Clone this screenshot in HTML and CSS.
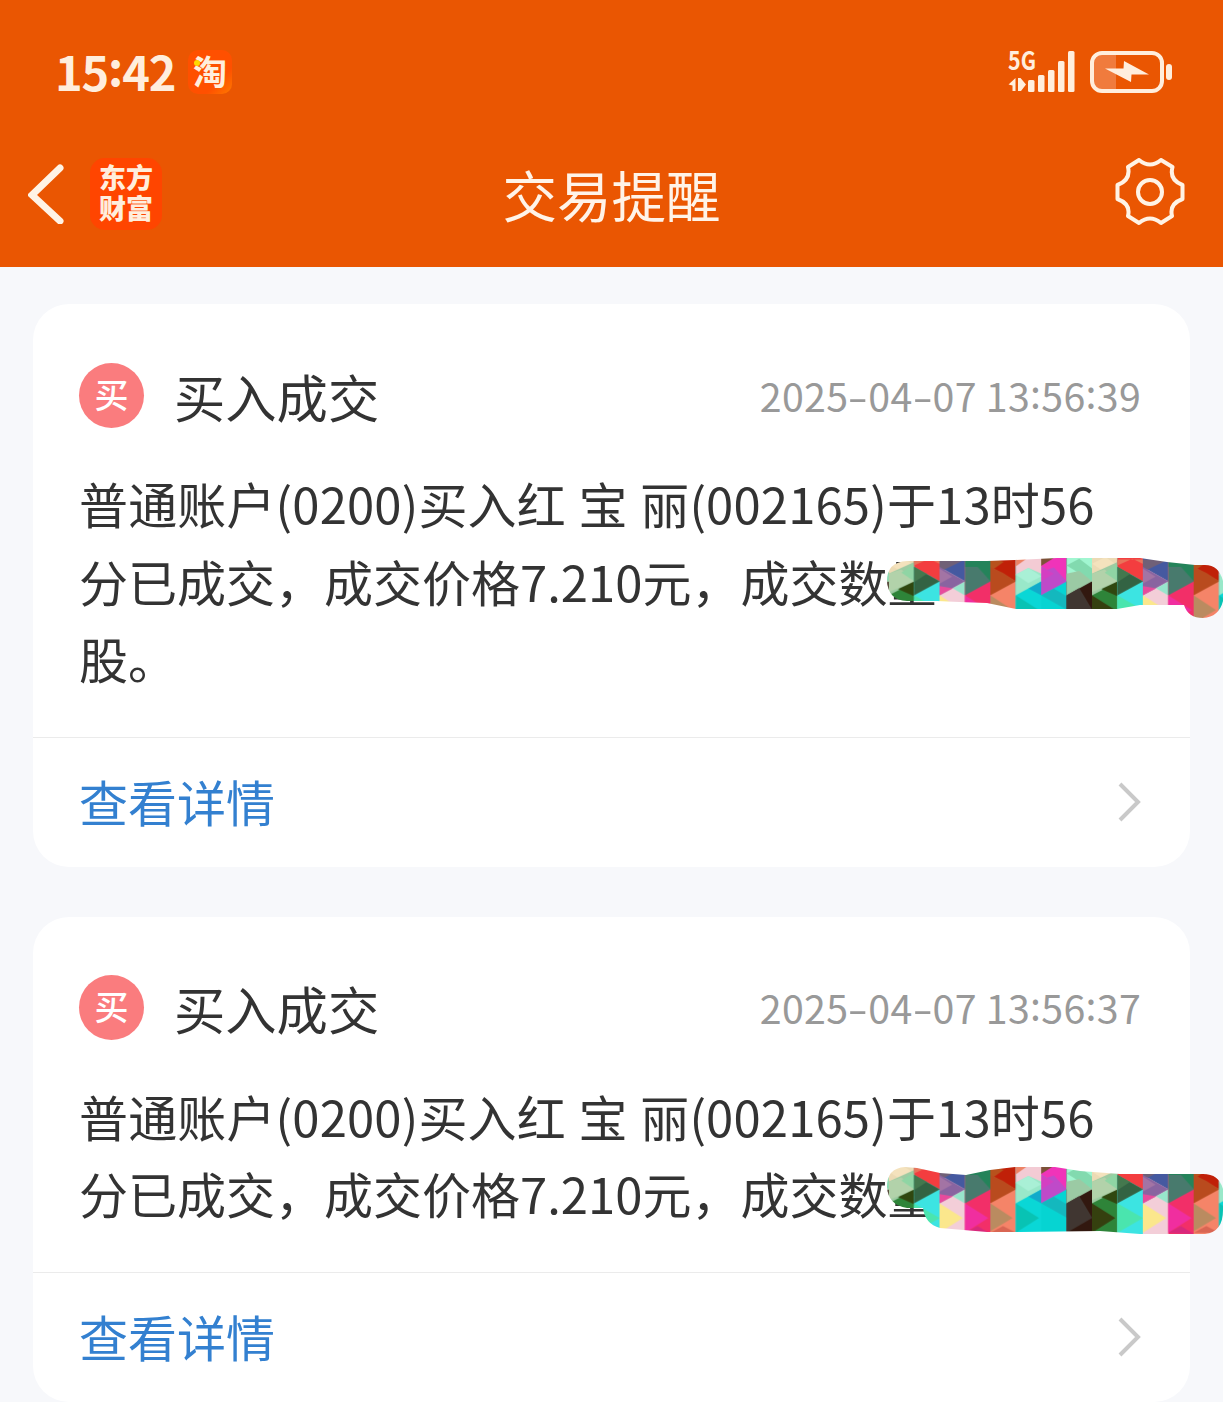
FILE: index.html
```html
<!DOCTYPE html>
<html lang="zh-CN">
<head>
    <meta charset="UTF-8">
    <meta name="viewport" content="width=device-width, initial-scale=1">
    <title>交易提醒</title>
    <link rel="stylesheet" href="styles.css">
</head>
<body>
    <header class="header">
        <div class="status">
            <span class="time">15<b>:</b>42</span>
            <span class="taobao">淘</span>
            <svg class="signal" width="68" height="44" viewBox="0 0 68 44">
                <text x="0" y="20" class="net" textLength="28" lengthAdjust="spacingAndGlyphs">5G</text>
                <path d="M0.500 34.500L7.500 28v13H4.500V35.500zM10 28h2.500l5.500 6.500-5 6.500H10z"/>
                <rect x="20" y="30" width="6.500" height="12" rx="1.500"/>
                <rect x="30" y="25" width="6.500" height="17" rx="1.500"/>
                <rect x="40" y="20" width="6.500" height="22" rx="1.500"/>
                <rect x="50" y="11" width="6.500" height="31" rx="1.500"/>
                <rect x="60" y="1" width="6.500" height="41" rx="1.500"/>
            </svg>
            <svg class="battery" width="82" height="42" viewBox="0 0 82 42">
                <path d="M12 2h14v38H12Q3 38 3 30V11Q3 4 12 2z" fill="#f07b3d"/>
                <rect x="2" y="2" width="70" height="38" rx="10" fill="none" stroke="#ffeedd" stroke-width="4"/>
                <rect x="76" y="13" width="6" height="16" rx="3"/>
                <path d="M15 17.500H33.500L34 10l25 13.500H41.500L41 31z"/>
            </svg>
        </div>
        <div class="nav">
            <svg class="back" width="36" height="60" viewBox="0 0 36 60">
                <path d="M32 4L4 31l28 26"/>
            </svg>
            <div class="logo">东方<br>财富</div>
            <h1 class="nav-title">交易提醒</h1>
            <svg class="gear" width="70" height="68" viewBox="0 0 70 68">
                <path d="M24 2Q35 11 46 2L57.500 9Q54 22 67.500 27V41Q54 46 57 58L46 65Q35 56 24 65L13 58Q16 46 2.500 41V27Q16 22 13 9Z"/>
                <circle cx="35" cy="34" r="12"/>
            </svg>
        </div>
    </header>

    <svg class="defs" width="0" height="0">
        <defs>
            <!-- eight triangle columns, repeated -->
            <pattern id="mosaic" width="610" height="320" patternUnits="userSpaceOnUse" patternTransform="translate(1.700 -10) scale(.3333)">
                <g>
                    <path fill="#2e8439" d="M0 0h77v320H0z"/>
                    <path fill="#ecdab4" d="M0 0h77v100H0z"/>
                    <path fill="#f4e2bd" d="M0 65L40 45 77 70 38 90z"/>
                    <path fill="#9dcba2" d="M0 95L77 60v60L0 160z"/>
                    <path fill="#b2d2aa" d="M0 95L38 82 77 118 0 150z"/>
                    <path fill="#8fd5a4" d="M77 65v53L38 92z"/>
                    <path fill="#30470f" d="M77 118v45L28 141z"/>
                    <path fill="#35400f" d="M0 160l70 44L0 248z"/>
                </g>
                <g transform="translate(76.250)">
                    <path fill="#3ce4e2" d="M0 0h77v320H0z"/>
                    <path fill="#f33d3f" d="M0 0h77v118L0 75z"/>
                    <path fill="#e8745b" d="M0 52h77v14L45 50 0 70z"/>
                    <path fill="#336343" d="M0 75l77 43-77 42z"/>
                    <path fill="#44784e" d="M0 75l38 21L0 120z"/>
                    <path fill="#4ae5ae" d="M0 160l77 44-77 44z"/>
                </g>
                <g transform="translate(152.500)">
                    <path fill="#f3ced8" d="M0 0h77v320H0z"/>
                    <path fill="#4559a0" d="M0 0h77v118L0 75z"/>
                    <path fill="#706077" d="M0 52h77L0 90z"/>
                    <path fill="#8964a0" d="M0 75l77 43-77 42z"/>
                    <path fill="#a374a4" d="M0 80l38 24L0 125z"/>
                    <path fill="#e74b9c" d="M0 132l40 7-40 21z"/>
                    <path fill="#97e6cc" d="M77 118v43L40 139z"/>
                    <path fill="#fbe78c" d="M0 160l70 44-70 44z"/>
                </g>
                <g transform="translate(228.750)">
                    <path fill="#f22f68" d="M0 0h77v320H0z"/>
                    <path fill="#24835a" d="M0 0h77v118L0 75z"/>
                    <path fill="#487a6d" d="M0 75l38 0 39 43-77 42z"/>
                    <path fill="#f02e9f" d="M0 160l70 44-70 44z"/>
                    <path fill="#d8287c" d="M0 248l38-20 39 24z"/>
                </g>
                <g transform="translate(305)">
                    <path fill="#f58468" d="M0 0h77v320H0z"/>
                    <path fill="#c02008" d="M0 0h77v118L0 75z"/>
                    <path fill="#b7521d" d="M0 45l40 15L0 88z"/>
                    <path fill="#b94b1e" d="M0 75l38 18 39 25-77 42z"/>
                    <path fill="#ba8b60" d="M0 160l67 44-67 40z"/>
                    <path fill="#d96653" d="M0 248l38-20 39 20z"/>
                </g>
                <g transform="translate(381.250)">
                    <path fill="#0ad7d6" d="M0 0h77v320H0z"/>
                    <path fill="#f3cbd4" d="M0 0h77v100H0z"/>
                    <path fill="#ed8264" d="M0 45h40L0 73z"/>
                    <path fill="#99e8c9" d="M0 98l38-20 39 17v23L0 160z"/>
                    <path fill="#a9f0d6" d="M0 98l38-20 39 25-39 20z"/>
                    <path fill="#12aaca" d="M77 118v42L38 140z"/>
                    <path fill="#08c3b4" d="M0 160l70 44-70 44z"/>
                </g>
                <g transform="translate(457.500)">
                    <path fill="#06d4d2" d="M0 0h77v320H0z"/>
                    <path fill="#f033b9" d="M0 0h77v118L0 75z"/>
                    <path fill="#7c5138" d="M0 40h50L0 72z"/>
                    <path fill="#bf4ac9" d="M0 90l38-14 39 42-77 42z"/>
                    <path fill="#d43fc2" d="M0 75l38 20L0 118z"/>
                    <path fill="#14b8be" d="M0 160l38-20 39 23v40z"/>
                </g>
                <g transform="translate(533.750)">
                    <path fill="#32180f" d="M0 0h77v320H0z"/>
                    <path fill="#a1f6d1" d="M0 0h77v118H0z"/>
                    <path fill="#82daaf" d="M0 70l38-20 39 30v38z"/>
                    <path fill="#9bcaa4" d="M0 95l38-8 39 31-77 42z"/>
                    <path fill="#403631" d="M0 160l38-22 39 66-77 44z"/>
                </g>
            </pattern>
            <pattern id="mosaic-first" href="#mosaic" patternTransform="translate(1.700 -13) scale(.3333)"/>
        </defs>
    </svg>

    <main class="list">
        <section class="card">
            <div class="card-head">
                <span class="badge">买</span>
                <h2 class="card-title">买入成交</h2>
                <time class="date">2025<i>-</i>04<i>-</i>07 13<b>:</b>56<b>:</b>39</time>
            </div>
            <div class="message">
                <p class="first">普通账户(0200)买入红 宝 丽(002165)于13时56</p>
                <p>分已成交，成交价格7.210元，成交数量</p>
                <p>股。</p>
                <svg class="cover" width="336" height="86" viewBox="0 0 336 86">
                    <path fill="url(#mosaic-first)" d="M20 6Q0 7 0 26Q1 45 20 46L50 46Q70 47 100 48L129 54H155L230 54 253 50H297Q301 63 316 63Q332 62 336 46V26Q332 10 318 10H308L280 7 253 3H170L128 5 100 6H50Z"/>
                </svg>
            </div>
            <a class="detail">
                <span>查看详情</span>
                <svg width="24" height="40" viewBox="0 0 24 40"><path d="M2 2l18 18L2 38"/></svg>
            </a>
        </section>

        <section class="card">
            <div class="card-head">
                <span class="badge">买</span>
                <h2 class="card-title">买入成交</h2>
                <time class="date">2025<i>-</i>04<i>-</i>07 13<b>:</b>56<b>:</b>37</time>
            </div>
            <div class="message">
                <p class="first">普通账户(0200)买入红 宝 丽(002165)于13时56</p>
                <p>分已成交，成交价格7.210元，成交数量</p>
                <svg class="cover second" width="336" height="86" viewBox="0 0 336 86">
                    <path fill="url(#mosaic)" d="M18 7Q0 8 0 27Q1 45 20 48H36Q38 64 53 68L100 72H133L213 71 253 74H318Q336 72 336 50V29Q332 14 316 14H233L193 11 168 7H128L103 10 79 15 53 13 30 8Z"/>
                </svg>
            </div>
            <a class="detail">
                <span>查看详情</span>
                <svg width="24" height="40" viewBox="0 0 24 40"><path d="M2 2l18 18L2 38"/></svg>
            </a>
        </section>
    </main>
</body>
</html>
```
FILE: styles.css
```css
body {
    margin: 0;
    height: 1402px;
    overflow: hidden;
    background-color: #f7f8fb;
    color: #333;
    font-family: "Noto Sans CJK SC", sans-serif;
}

h1, h2, p {
    margin: 0;
    font-weight: 400;
}

.header {
    height: 267px;
    background-color: #ea5602;
    color: #ffeedd;
}

.status {
    display: flex;
    align-items: center;
    height: 120px;
    padding: 24px 51px 0 55px;
    box-sizing: border-box;
}

.time {
    width: 133px;
    padding-bottom: 2px;
    font-size: 47px;
    font-weight: 700;
    letter-spacing: -1.2px;
    line-height: 90px;
    white-space: nowrap;
}

.time b, .date b {
    font-weight: inherit;
    line-height: 1;
    vertical-align: 5px;
}

.taobao {
    position: relative;
    width: 44px;
    height: 44px;
    border-radius: 10px;
    background: linear-gradient(135deg, #ff5000 70%, #ff7a00);
    font-size: 34px;
    font-weight: 700;
    line-height: 42px;
    text-align: center;
}

.taobao::after {
    content: "";
    position: absolute;
    left: 6px;
    top: 10px;
    width: 6px;
    height: 6px;
    border-radius: 50%;
    background-color: #ffd800;
}

.signal {
    margin-left: auto;
    overflow: visible;
    fill: #ffeedd;
}

.net {
    font-size: 26px;
    font-weight: 700;
}

.battery {
    margin-left: 14px;
    fill: #ffeedd;
}

.nav {
    display: grid;
    grid-template-columns: 62px 72px 1fr 70px 38px;
    align-items: center;
    height: 147px;
    padding-left: 28px;
    box-sizing: border-box;
}

.back, .gear {
    fill: none;
    stroke: #fff3e5;
    stroke-width: 6;
}

.back {
    stroke-width: 7;
    stroke-linecap: round;
}

.logo {
    height: 72px;
    padding-top: 3px;
    box-sizing: border-box;
    border-radius: 15px;
    background-color: #ff4500;
    font-size: 27px;
    font-weight: 900;
    line-height: 31px;
    text-align: center;
}

.nav-title {
    padding: 0 54px 1px 0;
    color: #fff3e8;
    font-size: 54.5px;
    text-align: center;
}

.gear {
    margin-bottom: 3px;
    stroke-width: 4;
    stroke-linejoin: round;
}

.defs {
    display: block;
}

.list {
    display: flex;
    flex-direction: column;
    gap: 50px;
    padding: 37px 33px 0;
}

.card {
    border-radius: 36px;
    background-color: #fff;
}

.card-head {
    display: flex;
    align-items: center;
    height: 162px;
    padding: 20px 49px 0 46px;
    box-sizing: border-box;
}

.badge {
    width: 65px;
    height: 65px;
    border-radius: 50%;
    background-color: #fa7c7e;
    color: #fff;
    font-size: 34px;
    font-weight: 500;
    line-height: 61px;
    text-align: center;
}

.card-title {
    margin-left: 30px;
    font-size: 51.3px;
}

.date {
    margin-left: auto;
    padding-bottom: 2px;
    color: #999;
    font-size: 39.3px;
    letter-spacing: 0.3px;
    white-space: nowrap;
}

.date b {
    vertical-align: 3px;
}

.date i {
    display: inline-block;
    width: 20px;
    font-style: normal;
    text-align: center;
    transform: scaleX(1.5);
}

.message {
    position: relative;
    margin-top: -2px;
    padding: 0 46px 40px;
    font-size: 49px;
    line-height: 77.5px;
    white-space: nowrap;
}

.first {
    letter-spacing: 0.15px;
    word-spacing: 1.5px;
}

.cover {
    position: absolute;
    left: 854px;
    top: 91px;
}

.second {
    top: 83px;
}

.detail {
    display: flex;
    align-items: center;
    justify-content: space-between;
    height: 130px;
    padding: 0 48px 0 46px;
    box-sizing: border-box;
    border-top: 1px solid #ebebeb;
    color: #3380d0;
    font-size: 49px;
}

.detail span {
    padding-bottom: 3px;
}

.detail svg {
    fill: none;
    stroke: #c9c9c9;
    stroke-width: 4;
}
```
